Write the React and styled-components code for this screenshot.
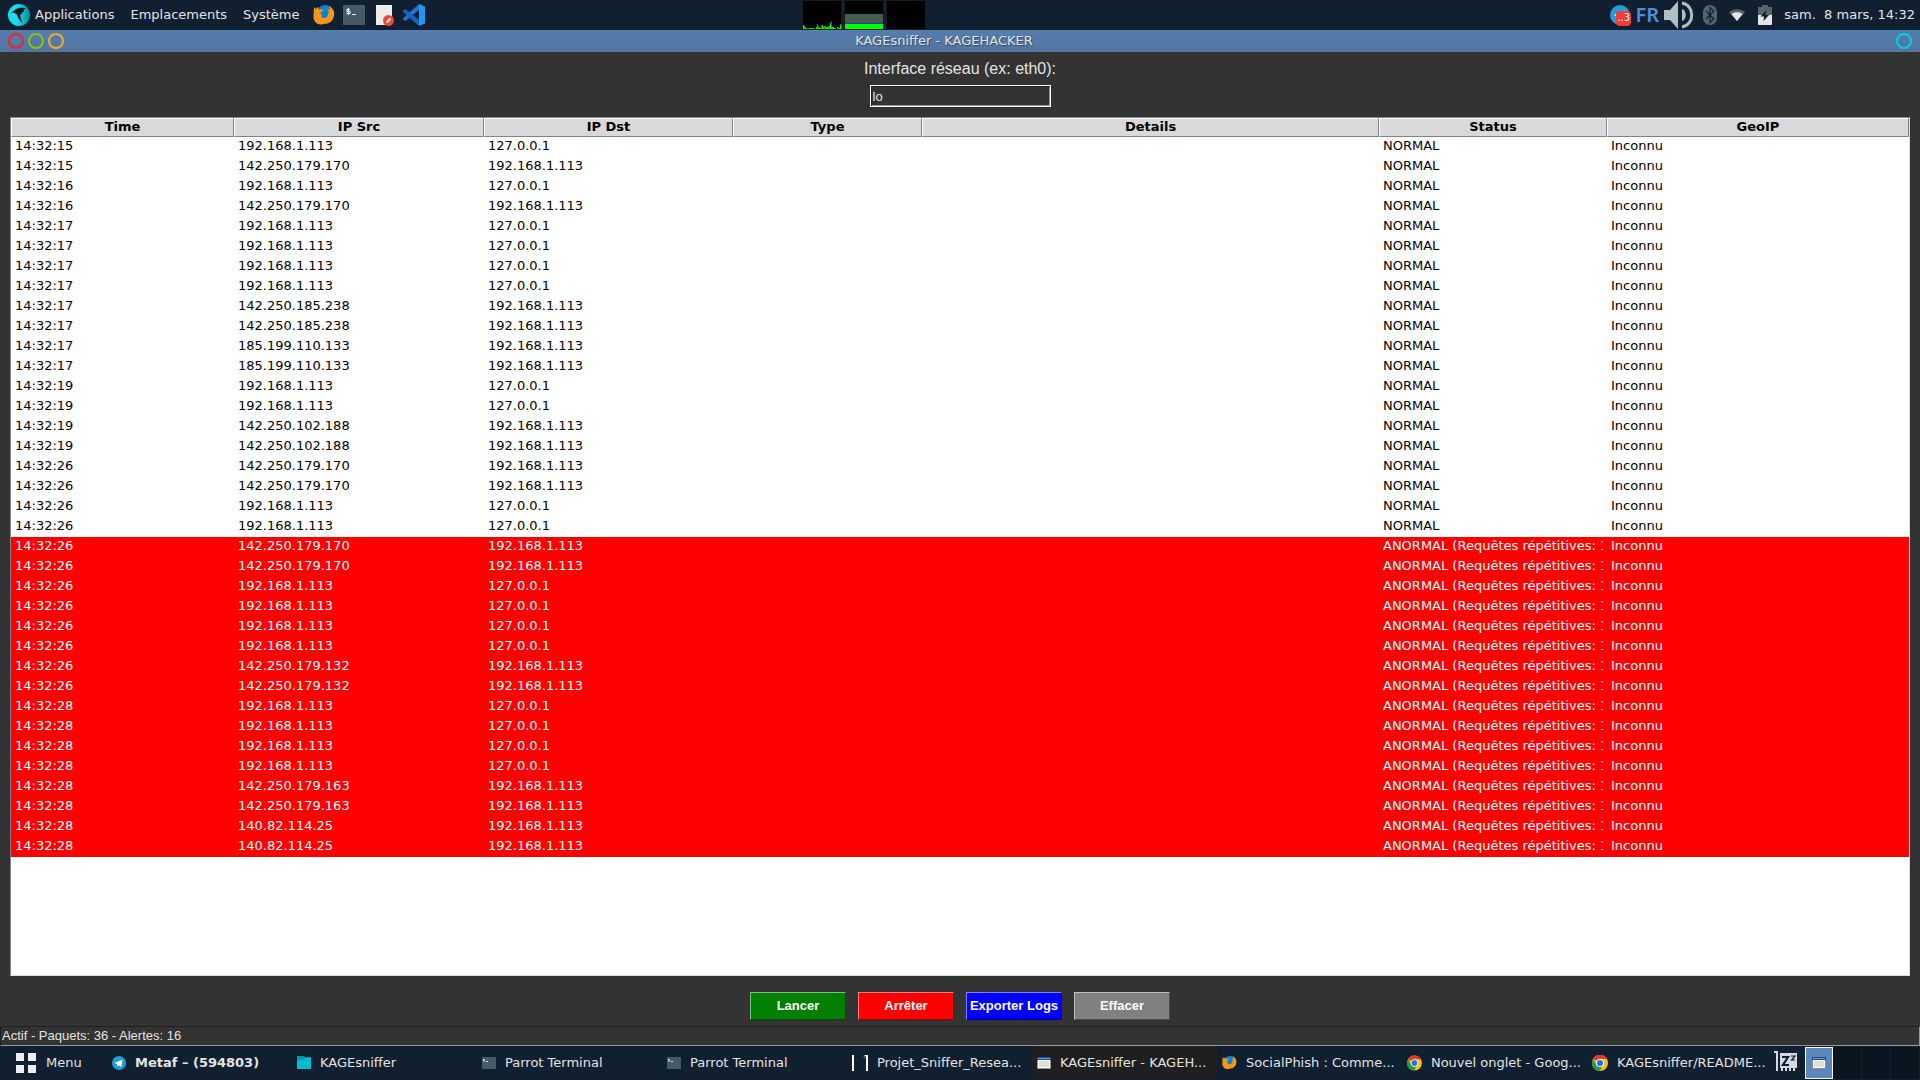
import React, { useState } from 'react';
import styled, { createGlobalStyle, css } from 'styled-components';

const Global = createGlobalStyle`
  *, *::before, *::after { box-sizing: border-box; }
  html, body, #root { height: 100%; }
  body {
    margin: 0;
    overflow: hidden;
    background: #333333;
    color: #e3e3e3;
    font: 13px/20px "DejaVu Sans", "Noto Sans", sans-serif;
  }
  button, input { font: inherit; color: inherit; }
`;

const Desktop = styled.div`
  display: flex;
  flex-direction: column;
  height: 100vh;
`;

const TopPanel = styled.header`
  display: grid;
  grid-template-columns: 802px auto 1fr;
  height: 30px;
  flex: none;
  background: #112030;
`;

const PanelGroup = styled.div`
  display: flex;
  align-items: center;
  justify-content: ${(p) => (p.$end ? 'flex-end' : 'flex-start')};
  gap: ${(p) => p.$gap || 0}px;
  padding: 0 ${(p) => (p.$end ? 5 : 0)}px 0 ${(p) => (p.$end ? 0 : 8)}px;
`;

const PanelButton = styled.button`
  display: flex;
  align-items: center;
  gap: 5px;
  height: 28px;
  padding: 0;
  border: 0;
  background: transparent;
  white-space: nowrap;
`;

const MenuButtons = styled.nav`
  display: flex;
  gap: 16px;
  margin-right: 5px;
`;

const Monitors = styled.div`
  display: flex;
  gap: 2px;
`;

const Tray = styled.div`
  display: flex;
  align-items: center;
  margin-right: 3px;
`;

const TrayItem = styled.button`
  display: flex;
  align-items: center;
  justify-content: center;
  width: ${(p) => p.$w}px;
  height: 30px;
  padding: 0;
  border: 0;
  background: transparent;
`;

const Lang = styled(TrayItem)`
  color: #4a90d9;
  font-family: "Noto Sans", "Open Sans", sans-serif;
  font-weight: 600;
  font-size: 20px;
`;

const TitleBar = styled.div`
  display: grid;
  grid-template-columns: 1fr auto 1fr;
  align-items: center;
  flex: none;
  height: 22px;
  padding: 0 8px;
  background: linear-gradient(#547dae, #52759f);
`;

const WindowTitle = styled.h1`
  margin: 0;
  padding-right: 32px;
  font-size: 13px;
  font-weight: 400;
  line-height: 20px;
  text-shadow: 1px 1px 1px #2f4766;
`;

const WindowButtons = styled.div`
  display: flex;
  gap: 4px;
  justify-content: ${(p) => (p.$end ? 'flex-end' : 'flex-start')};
`;

const Ring = styled.button`
  width: 16px;
  height: 16px;
  padding: 0;
  border: 2px solid ${(p) => p.$color};
  border-radius: 50%;
  background: transparent;
`;

const Sniffer = styled.main`
  display: flex;
  flex-direction: column;
  flex: 1;
  min-height: 0;
`;

const InterfaceField = styled.div`
  display: flex;
  flex-direction: column;
  align-items: center;
  gap: 6px;
  padding: 7px 0 10px;
`;

const FieldLabel = styled.label`
  font: 16px/20px "Liberation Sans", Arial, sans-serif;
`;

const FieldInput = styled.input`
  width: 181px;
  height: 22px;
  padding: 0 1px 0 2px;
  border: 1px solid #ffffff;
  outline: 0;
  border-radius: 0;
  background: #333333;
  box-shadow: inset 1px 1px 0 #1f1f1f, inset -1px -1px 0 #999999;
  caret-color: #000000;
  font: 13px/18px "Liberation Sans", Arial, sans-serif;
`;

const TableFrame = styled.div`
  flex: 1;
  min-height: 0;
  margin: 0 10px;
  border: 1px solid;
  border-color: #828282 #dcdcdc #dcdcdc #828282;
  background: #ffffff;
  overflow: hidden;
`;

const PacketTable = styled.table`
  width: 100%;
  table-layout: fixed;
  border-collapse: separate;
  border-spacing: 0;
  color: #000000;
`;

const HeadCell = styled.th`
  height: 19px;
  padding: 0;
  border: 1px solid;
  border-color: #ffffff #828282 #828282 #ffffff;
  background: #d9d9d9;
  font-weight: 700;
  line-height: 15px;
  vertical-align: top;
`;

const Row = styled.tr`
  ${(p) => p.$alert && css`
    background: #ff0000;
    color: #ffffff;
  `}
`;

const Cell = styled.td`
  height: 20px;
  padding: 0 0 0 4px;
  line-height: 18px;
  vertical-align: top;
  white-space: nowrap;
`;

const Clip = styled.div`
  overflow: hidden;
  margin-right: 4px;
`;

const Actions = styled.div`
  display: flex;
  justify-content: center;
  gap: 12px;
  padding: 16px 0 6px;
`;

const Action = styled.button`
  width: 96px;
  height: 28px;
  padding: 0;
  border: 1px solid;
  border-color: ${(p) => p.$light} ${(p) => p.$dark} ${(p) => p.$dark} ${(p) => p.$light};
  background: ${(p) => p.$bg};
  color: #ffffff;
  font: bold 13px/20px "Liberation Sans", Arial, sans-serif;
  white-space: nowrap;
`;

const StatusBar = styled.footer`
  flex: none;
  height: 20px;
  padding: 0 1px;
  border: 1px solid;
  border-color: #1f1f1f #999999 #999999 #1f1f1f;
  font: 13px/18px "Liberation Sans", Arial, sans-serif;
`;

const TaskBar = styled.nav`
  display: flex;
  align-items: stretch;
  flex: none;
  height: 34px;
  background: #112030;
`;

const MenuTask = styled(PanelButton)`
  width: 107px;
  height: 34px;
  padding-left: 16px;
  gap: 10px;
`;

const Task = styled.button`
  display: flex;
  align-items: center;
  gap: 9px;
  flex: 0 1 185px;
  min-width: 0;
  height: 33px;
  padding: 0 6px 0 5px;
  border: 0;
  border-radius: 4px;
  background: ${(p) => (p.$active ? '#1f1f1f' : 'transparent')};
  font-weight: ${(p) => (p.$bold ? 700 : 400)};
  white-space: nowrap;
`;

const Workspaces = styled.div`
  display: flex;
  flex: 1;
  margin-left: 6px;
`;

const Workspace = styled.button`
  display: flex;
  align-items: center;
  justify-content: center;
  width: ${(p) => (p.$active ? 28 : 29)}px;
  margin-top: 1px;
  margin-bottom: 1px;
  padding: 0;
  border: ${(p) => (p.$active ? '1px solid #ffffff' : '0')};
  border-right: 1px solid ${(p) => (p.$active ? '#ffffff' : '#112030')};
  background: ${(p) => (p.$active ? '#5b87bb' : '#0b1520')};
`;

const ParrotIcon = () => (
  <svg width="22" height="22" viewBox="0 0 22 22">
    <defs>
      <linearGradient id="parrot" x1="0" x2="1">
        <stop offset="0.4" stopColor="#14e0ee" />
        <stop offset="1" stopColor="#078a96" />
      </linearGradient>
    </defs>
    <circle cx="11" cy="11" r="11" fill="url(#parrot)" />
    <path d="M2.500 9l3-2C8 4.500 12 2.500 18 4.500l-2.500 1.200L16 8l-2.500.3L14 10l-2 .5 2 8.500-3.500-4.500-2-4.500L5 8.500z" fill="#08151c" />
  </svg>
);

const FirefoxIcon = ({ size = 22 }) => (
  <svg width={size} height={size} viewBox="0 0 22 22">
    <circle cx="12" cy="9" r="8" fill="#0a84d0" />
    <path d="M1 3l2 2 2-2 1 3c2-1 4-1 5 1l-3 1c-1 1 0 2 1 3l-1 2c3 2 7 1 7-3l1-2-2-3 3 1-1-4c4 2 6 6 5 10-1 5-5 8-10 8C4 22 0 17 .5 12 .5 9 1 7 1 3z" fill="#f7941d" />
    <path d="M8 8c2-1 3-2 5-1l-2 3 1 3c-2 0-4-1-4-5z" fill="#0a84d0" />
  </svg>
);

const TerminalIcon = ({ small }) => (
  <svg width={small ? 14 : 22} height={small ? 12 : 20} viewBox={small ? '0 0 14 12' : '0 0 22 20'}>
    <rect width="22" height="20" rx={small ? 0 : 1} fill="#455a64" />
    {small ? (
      <path d="M2 2v3M1 3h2M4 4.500h2" stroke="#dce4e8" fill="none" />
    ) : (
      <path d="M7 4.500H4v2h3v2H3.500M5.300 3v7M9 9.500h4" stroke="#e8eef0" strokeWidth="1.100" fill="none" />
    )}
  </svg>
);

const EditorIcon = () => (
  <svg width="22" height="22" viewBox="0 0 22 22">
    <path d="M3 1h16v20H3z" fill="#ececec" />
    <circle cx="15.500" cy="16.500" r="5.500" fill="#f44336" />
    <path d="M13.500 18.500l4-4" stroke="#fff" strokeWidth="2" />
  </svg>
);

const CodeIcon = () => (
  <svg width="22" height="22" viewBox="0 0 22 22">
    <path d="M16 0v6L2.500 17 0 15.500v-1z" fill="#1976d2" />
    <path d="M0 7l2.500-2L16 16v6L0 8z" fill="#1565c0" />
    <path d="M16 0l6 2.500v17L16 22z" fill="#2196f3" />
  </svg>
);

const CPU = [4, 2, 1, 0, 1, 1, 1, 1, 0, 2, 3, 2, 1, 4, 2, 3, 2, 2, 3, 6, 2, 2, 1, 0, 2, 1, 5];

const CpuGraph = () => (
  <svg width="40" height="30" viewBox="0 0 40 30">
    <path d="M.5 .5h39v29H.5z" fill="#000" stroke="#1a1a1a" />
    {CPU.map((h, i) => (
      <rect key={i} x={1 + i * 1.420} y={29 - h} width="1.400" height={h} fill="#00ff00" />
    ))}
    <path d="M29.500 21v2M38.500 24v1M17.500 27v1" stroke="#ff0000" />
    <path d="M15.500 24v3" stroke="#666" />
  </svg>
);

const MemoryGraph = () => (
  <svg width="40" height="30" viewBox="0 0 40 30">
    <path d="M.5 .5h39v29H.5z" fill="#000" stroke="#1a1a1a" />
    <path d="M1 14h38v9H1z" fill="#475c50" />
    <path d="M1 23h38v1H1z" fill="#1d3fae" />
    <path d="M1 24h38v5H1z" fill="#00ff00" />
  </svg>
);

const NetGraph = () => (
  <svg width="40" height="30" viewBox="0 0 40 30">
    <path d="M.5 .5h39v29H.5z" fill="#000" stroke="#1a1a1a" />
  </svg>
);

const Badge = styled.span`
  position: absolute;
  left: 6px;
  top: 6px;
  width: 15px;
  height: 15px;
  border-radius: 4px;
  background: #f23c34;
  color: #ffffff;
  font-size: 10px;
  line-height: 14px;
  text-align: center;
`;

const BadgeHost = styled.span`
  position: relative;
  display: flex;
`;

const TelegramIcon = ({ size = 14 }) => (
  <svg width={size} height={size} viewBox="0 0 14 14">
    <circle cx="7" cy="7" r="7" fill="#259cd8" />
    <path d="M2.500 7l8-3.300-1.300 7.200-2.600-1.700-1.300 1.200-.3-2.500z" fill="#fff" />
  </svg>
);

const SpeakerIcon = () => (
  <svg width="30" height="28" viewBox="0 0 30 28">
    <path d="M0 9h6l8-9v28l-8-9H0z" fill="#b0bec5" />
    <path d="M18 8c5 1 5 11 0 12z" fill="#b0bec5" />
    <path d="M18 2c13 2 13 22 0 24" fill="none" stroke="#b0bec5" strokeWidth="3" />
  </svg>
);

const BluetoothIcon = () => (
  <svg width="14" height="20" viewBox="0 0 14 20">
    <rect width="14" height="20" rx="7" fill="#59636e" />
    <path d="M3 6l8 8-4 3.500v-15L11 6l-8 8" fill="none" stroke="#112030" strokeWidth="1.200" />
  </svg>
);

const WifiIcon = () => (
  <svg width="16" height="12" viewBox="0 0 16 12">
    <path d="M0 3.500C4-.8 12-.8 16 3.500L8 12z" fill="#59636e" />
    <path d="M2.500 5c3-2.500 8-2.500 11 0L8 12z" fill="#e4e6e8" />
  </svg>
);

const BatteryIcon = () => (
  <svg width="14" height="20" viewBox="0 0 14 20">
    <path d="M0 2h4V0h6v2h4v8H0z" fill="#59636e" />
    <path d="M0 10h14v9a1 1 0 0 1-1 1H1a1 1 0 0 1-1-1z" fill="#e4e6e8" />
    <path d="M8.500 5l-6 6.500H6l-.5 4.500L11 10H7.500z" fill="#112030" />
  </svg>
);

const GridIcon = () => (
  <svg width="20" height="20" viewBox="0 0 20 20">
    <path d="M0 0h8v8H0zM12 0h8v8h-8zM0 12h8v8H0zM12 12h8v8h-8z" fill="#eeeeee" />
  </svg>
);

const FolderIcon = () => (
  <svg width="14" height="13" viewBox="0 0 14 13">
    <path d="M0 1V0h7l1 1h6v4H0z" fill="#0097a7" />
    <path d="M0 4h5l2-2h7v11H0z" fill="#00bcd4" />
  </svg>
);

const BracketIcon = () => (
  <svg width="16" height="16" viewBox="0 0 16 16">
    <path d="M0 0h2v16H0zM12 0h4v16h-2V2z" fill="#fff" />
    <path d="M11 0l3 3h-2z" fill="#1976d2" />
  </svg>
);

const WindowIcon = () => (
  <svg width="14" height="12" viewBox="0 0 14 12">
    <path d="M0 0h14v12H0z" fill="#8b8d86" />
    <path d="M0 0h14v3H0z" fill="#224b86" />
    <path d="M1 1h12v1H1z" fill="#6b9bd6" />
    <path d="M1 3h12v8H1z" fill="#fff" />
    <path d="M2 4h10v6H2z" fill="#dedfda" />
  </svg>
);

const ChromeIcon = () => (
  <svg width="16" height="16" viewBox="0 0 16 16">
    <circle cx="8" cy="8" r="8" fill="#fbc116" />
    <path d="M8 8L1.070 4A8 8 0 0 1 14.930 4H8z" fill="#e33b2e" />
    <path d="M8 16A8 8 0 0 1 1.070 4L4.500 10 8 12l2-.5z" fill="#259b48" />
    <circle cx="8" cy="8" r="4" fill="#fff" />
    <circle cx="8" cy="8" r="3.100" fill="#1a73e8" />
  </svg>
);

const SleepIcon = () => (
  <svg width="23" height="20" viewBox="0 0 23 20">
    <path d="M0 0h4v20H2V2H0zM6 2h17v15h-2v3h-2v-3h-2v3h-2v-3h-2v3h-2v-3H9v3H7v-3H6z" fill="#d3dae6" />
    <path d="M8 6h6l-5 8h6" fill="none" stroke="#112030" strokeWidth="2.200" />
    <path d="M17 5h4l-3.500 4H21" fill="none" stroke="#112030" strokeWidth="1.200" />
  </svg>
);

const COLUMNS = [
  { name: 'Time', width: 223 },
  { name: 'IP Src', width: 250 },
  { name: 'IP Dst', width: 249 },
  { name: 'Type', width: 189 },
  { name: 'Details' },
  { name: 'Status', width: 228 },
  { name: 'GeoIP', width: 302 },
];

const HOST = '192.168.1.113';
const LOOP = '127.0.0.1';
const out = (second, count = 1) => Array(count).fill([`14:32:${second}`, HOST, LOOP]);
const inn = (second, ip, count = 1) => Array(count).fill([`14:32:${second}`, ip, HOST]);

const PACKETS = [
  ...out(15), ...inn(15, '142.250.179.170'),
  ...out(16), ...inn(16, '142.250.179.170'),
  ...out(17, 4), ...inn(17, '142.250.185.238', 2), ...inn(17, '185.199.110.133', 2),
  ...out(19, 2), ...inn(19, '142.250.102.188', 2),
  ...inn(26, '142.250.179.170', 2), ...out(26, 2),
];

const ALERTS = [
  ...inn(26, '142.250.179.170', 2), ...out(26, 4), ...inn(26, '142.250.179.132', 2),
  ...out(28, 4), ...inn(28, '142.250.179.163', 2), ...inn(28, '140.82.114.25', 2),
];

const ROWS = [
  ...PACKETS.map((p) => ({ cells: [...p, '', '', 'NORMAL', 'Inconnu'] })),
  ...ALERTS.map((p) => ({
    alert: true,
    cells: [...p, '', '', 'ANORMAL (Requêtes répétitives: 1', 'Inconnu'],
  })),
];

const TASKS = [
  { icon: <TelegramIcon />, text: 'Metaf – (594803)', bold: true },
  { icon: <FolderIcon />, text: 'KAGEsniffer' },
  { icon: <TerminalIcon small />, text: 'Parrot Terminal' },
  { icon: <TerminalIcon small />, text: 'Parrot Terminal' },
  { icon: <BracketIcon />, text: 'Projet_Sniffer_Resea...' },
  { icon: <WindowIcon />, text: 'KAGEsniffer - KAGEH...', active: true },
  { icon: <FirefoxIcon size={15} />, text: 'SocialPhish : Comme...' },
  { icon: <ChromeIcon />, text: 'Nouvel onglet - Goog...' },
  { icon: <ChromeIcon />, text: 'KAGEsniffer/README...' },
];

export default function App() {
  const [iface, setIface] = useState('lo');
  return (
    <>
      <Global />
      <Desktop>
        <TopPanel>
          <PanelGroup $gap={8}>
            <MenuButtons>
              <PanelButton><ParrotIcon />Applications</PanelButton>
              <PanelButton>Emplacements</PanelButton>
              <PanelButton>Système</PanelButton>
            </MenuButtons>
            <PanelButton aria-label="Firefox"><FirefoxIcon /></PanelButton>
            <PanelButton aria-label="Terminal"><TerminalIcon /></PanelButton>
            <PanelButton aria-label="Pluma"><EditorIcon /></PanelButton>
            <PanelButton aria-label="VS Code"><CodeIcon /></PanelButton>
          </PanelGroup>
          <Monitors>
            <CpuGraph />
            <MemoryGraph />
            <NetGraph />
          </Monitors>
          <PanelGroup $end>
            <Tray>
              <TrayItem $w={22} aria-label="Telegram">
                <BadgeHost><TelegramIcon size={20} /><Badge>..3</Badge></BadgeHost>
              </TrayItem>
              <Lang $w={32}>FR</Lang>
              <TrayItem $w={32} aria-label="Volume"><SpeakerIcon /></TrayItem>
              <TrayItem $w={30} aria-label="Bluetooth"><BluetoothIcon /></TrayItem>
              <TrayItem $w={24} aria-label="Wi-Fi"><WifiIcon /></TrayItem>
              <TrayItem $w={32} aria-label="Batterie"><BatteryIcon /></TrayItem>
            </Tray>
            <PanelButton>sam.&nbsp; 8 mars, 14:32</PanelButton>
          </PanelGroup>
        </TopPanel>

        <TitleBar>
          <WindowButtons>
            <Ring $color="#f12229" aria-label="Fermer" />
            <Ring $color="#8ac010" aria-label="Agrandir" />
            <Ring $color="#f9a825" aria-label="Réduire" />
          </WindowButtons>
          <WindowTitle>KAGEsniffer - KAGEHACKER</WindowTitle>
          <WindowButtons $end>
            <Ring $color="#00d0dc" aria-label="Menu de la fenêtre" />
          </WindowButtons>
        </TitleBar>

        <Sniffer>
          <InterfaceField>
            <FieldLabel htmlFor="iface">Interface réseau (ex: eth0):</FieldLabel>
            <FieldInput id="iface" autoFocus value={iface} onChange={(e) => setIface(e.target.value)} />
          </InterfaceField>

          <TableFrame>
            <PacketTable>
              <colgroup>
                {COLUMNS.map((c) => <col key={c.name} width={c.width} />)}
              </colgroup>
              <thead>
                <tr>{COLUMNS.map((c) => <HeadCell key={c.name} scope="col">{c.name}</HeadCell>)}</tr>
              </thead>
              <tbody>
                {ROWS.map((row, i) => (
                  <Row key={i} $alert={row.alert}>
                    {row.cells.map((text, j) => <Cell key={j}><Clip>{text}</Clip></Cell>)}
                  </Row>
                ))}
              </tbody>
            </PacketTable>
          </TableFrame>

          <Actions>
            <Action $bg="#008000" $light="#7fbf7f" $dark="#004c00">Lancer</Action>
            <Action $bg="#ff0000" $light="#ff7f7f" $dark="#990000">Arrêter</Action>
            <Action $bg="#0000ff" $light="#7f7fff" $dark="#000099">Exporter Logs</Action>
            <Action $bg="#808080" $light="#bfbfbf" $dark="#4c4c4c">Effacer</Action>
          </Actions>
          <StatusBar>Actif - Paquets: 36 - Alertes: 16</StatusBar>
        </Sniffer>

        <TaskBar>
          <MenuTask><GridIcon />Menu</MenuTask>
          {TASKS.map((t, i) => (
            <Task key={i} $active={t.active} $bold={t.bold}>{t.icon}{t.text}</Task>
          ))}
          <TrayItem $w={27} aria-label="Veille"><SleepIcon /></TrayItem>
          <Workspaces>
            <Workspace $active aria-label="Espace 1"><WindowIcon /></Workspace>
            <Workspace aria-label="Espace 2" />
            <Workspace aria-label="Espace 3" />
            <Workspace aria-label="Espace 4" />
          </Workspaces>
        </TaskBar>
      </Desktop>
    </>
  );
}
